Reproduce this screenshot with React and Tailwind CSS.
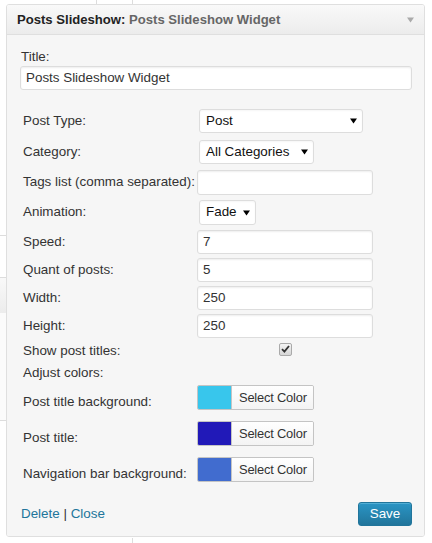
import React from 'react';

const rows = [
  { label: 'Post Type:', h: 'h-[30px]', kind: 'select', value: 'Post', w: 'w-[164px]' },
  { label: 'Category:', h: 'h-[32px]', kind: 'select', value: 'All Categories', w: 'w-[115px]' },
  { label: 'Tags list (comma separated):', h: 'h-[29px]', kind: 'input', value: '', tall: true },
  { label: 'Animation:', h: 'h-[31px]', kind: 'select', value: 'Fade', w: 'w-[57px]', tall: true },
  { label: 'Speed:', h: 'h-[28px]', kind: 'input', value: '7' },
  { label: 'Quant of posts:', h: 'h-[28px]', kind: 'input', value: '5' },
  { label: 'Width:', h: 'h-[28px]', kind: 'input', value: '250' },
  { label: 'Height:', h: 'h-[28px]', kind: 'input', value: '250' },
];

const colors = [
  { label: 'Post title background:', color: 'bg-[#38c6ec]' },
  { label: 'Post title:', color: 'bg-[#2119b8]' },
  { label: 'Navigation bar background:', color: 'bg-[#416ccf]' },
];

function Caret({ className }) {
  return (
    <svg width="7" height="6" viewBox="0 0 7 6" className={className}>
      <path d="M0 0.5 H7 L3.5 5.5 Z" fill="currentColor" />
    </svg>
  );
}

function Select({ value, w, tall }) {
  return (
    <div className={`ml-[2px] ${w} ${tall ? 'h-[25px]' : 'h-[24px]'} bg-white border border-[#dddddd] rounded-[3px] flex items-center justify-between pl-[6px] pr-[5px] text-[#111] shadow-[inset_0_1px_2px_rgba(0,0,0,0.04)]`}>
      <span>{value}</span>
      <Caret className="text-black" />
    </div>
  );
}

function Input({ value, tall }) {
  return (
    <div className={`w-[176px] ${tall ? 'h-[25px]' : 'h-[24px]'} bg-white border border-[#dddddd] rounded-[3px] flex items-center pl-[5px] text-[#333] shadow-[inset_0_1px_2px_rgba(0,0,0,0.07)]`}>
      {value}
    </div>
  );
}

function ColorPicker({ color }) {
  return (
    <div className="mt-px flex h-[25px] w-[117px] border border-[#c4c4c4] rounded-[2px] overflow-hidden">
      <div className={`w-[34px] h-full ${color} border-r border-[#c4c4c4]`} />
      <div className="flex-1 bg-gradient-to-b from-white to-[#f3f3f3] flex items-center pl-[7px] text-[12.9px] text-[#333] tracking-[-0.2px]">
        Select Color
      </div>
    </div>
  );
}

export default function App() {
  return (
    <div className="relative w-[432px] h-[543px] bg-white overflow-hidden font-['Liberation_Sans',Arial,sans-serif] text-[13.4px] text-[#333]">
      {/* page bits behind the widget */}
      <div className="absolute left-[96px] top-0 w-px h-[4px] bg-[#dddddd]" />
      <div className="absolute left-[132px] top-0 w-px h-[4px] bg-[#dddddd]" />
      <div className="absolute left-[132px] top-[538px] w-px h-[6px] bg-[#dddddd]" />
      <div className="absolute left-0 top-[235px] w-[6px] h-px bg-[#dddddd]" />
      <div className="absolute left-0 top-[277px] w-[6px] h-[36px] border-t border-[#dddddd] bg-gradient-to-b from-[#f9f9f9] to-[#ececec]" />
      <div className="absolute left-0 top-[313px] w-[6px] h-[107px] bg-[#fbfbfb]" />
      <div className="absolute left-0 top-[420px] w-[6px] h-px bg-[#dddddd]" />

      <div className="relative ml-[6px] mt-[4px] w-[419px] border border-[#dfdfdf] rounded-[3px] overflow-hidden">
        <div className="h-[30px] border-b border-[#dfdfdf] bg-gradient-to-b from-[#f9f9f9] to-[#ececec] flex items-center justify-between pl-[10px] pr-[10px]">
          <div className="font-bold text-[13.1px] leading-none">
            <span className="text-[#222]">Posts Slideshow:</span>{' '}
            <span className="text-[#666]">Posts Slideshow Widget</span>
          </div>
          <Caret className="text-[#aaaaaa]" />
        </div>

        <div className="bg-[#f6f6f6] pl-[13px] pr-[12px] pt-[14px] pb-[10px]">
          <div className="h-[16px] leading-[16px] pl-px">Title:</div>
          <div className="mt-px h-[24px] bg-white border border-[#dddddd] rounded-[3px] flex items-center pl-[5px] text-[#333] shadow-[inset_0_1px_2px_rgba(0,0,0,0.07)]">
            Posts Slideshow Widget
          </div>

          <div className="mt-[16px] pl-[3px]">
            {rows.map((r) => (
              <div key={r.label} className={`flex items-center ${r.h}`}>
                <div className="w-[174px] whitespace-nowrap">{r.label}</div>
                {r.kind === 'select' ? <Select value={r.value} w={r.w} tall={r.tall} /> : <Input value={r.value} tall={r.tall} />}
              </div>
            ))}

            <div className="flex items-center h-[22px]">
              <div className="w-[174px]">Show post titles:</div>
              <div className="w-[176px] flex justify-center pb-[4px]">
                <div className="w-[13px] h-[13px] border border-[#aaaaaa] rounded-[2px] bg-gradient-to-b from-[#f4f4f4] to-[#d6d6d6] flex items-center justify-center">
                  <svg width="9" height="8" viewBox="0 0 9 8">
                    <path d="M1 4.2 L3.4 6.6 L8 1" fill="none" stroke="#333" strokeWidth="1.8" />
                  </svg>
                </div>
              </div>
            </div>
            <div className="flex items-center h-[22px]">Adjust colors:</div>

            {colors.map((c) => (
              <div key={c.label} className="flex h-[36px]">
                <div className="w-[174px] self-center">{c.label}</div>
                <ColorPicker color={c.color} />
              </div>
            ))}
          </div>

          <div className="flex items-center justify-between pt-[10px]">
            <div className="pl-px text-[#21759b]">
              <span>Delete</span> <span className="text-[#333]">|</span> <span>Close</span>
            </div>
            <button className="w-[54px] h-[24px] rounded-[3px] border border-[#21759b] bg-gradient-to-b from-[#2a95c5] to-[#21759b] text-white text-[13.4px] shadow-[inset_0_1px_0_rgba(120,200,230,0.5)]">
              Save
            </button>
          </div>
        </div>
      </div>
    </div>
  );
}
